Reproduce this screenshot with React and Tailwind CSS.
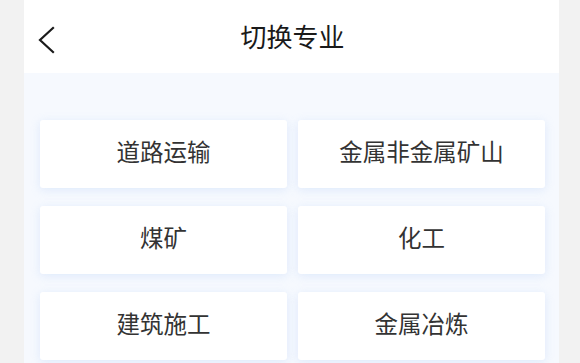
import React from 'react';

const majors = ['道路运输', '金属非金属矿山', '煤矿', '化工', '建筑施工', '金属冶炼'];

function BackIcon() {
  return (
    <svg className="h-[28px] w-[18px]" viewBox="0 0 18 28" fill="none" stroke="#1a1a1a" strokeWidth={2.2} strokeLinecap="square">
      <path d="M16 2 L3 14 L16 26" />
    </svg>
  );
}

export default function App() {
  return (
    <div
      className="flex h-[363px] w-[580px] overflow-hidden bg-[#f2f2f2]"
      style={{ fontFamily: '"Noto Sans CJK SC", "Noto Sans", sans-serif' }}
    >
      <div className="w-[24px] shrink-0" />
      <div className="flex w-[535px] shrink-0 flex-col bg-[#f6f9fe]">
        <header className="relative flex h-[73px] shrink-0 items-center justify-center bg-white">
          <button className="absolute left-[13px] top-[26px] flex items-center">
            <BackIcon />
          </button>
          <h1 className="pb-[2px] pl-[2px] text-[26px] leading-none text-[#1a1a1a]">切换专业</h1>
        </header>
        <div className="grid grid-cols-[247px_247px] gap-x-[11px] gap-y-[18px] pl-[16px] pt-[47px]">
          {majors.map((name) => (
            <div
              key={name}
              className="flex h-[68px] items-center justify-center rounded-[3px] bg-white pb-[4px] text-[23.5px] leading-none text-[#333] shadow-[0_2px_10px_rgba(170,200,245,0.3)]"
            >
              {name}
            </div>
          ))}
        </div>
      </div>
      <div className="flex-1" />
    </div>
  );
}
